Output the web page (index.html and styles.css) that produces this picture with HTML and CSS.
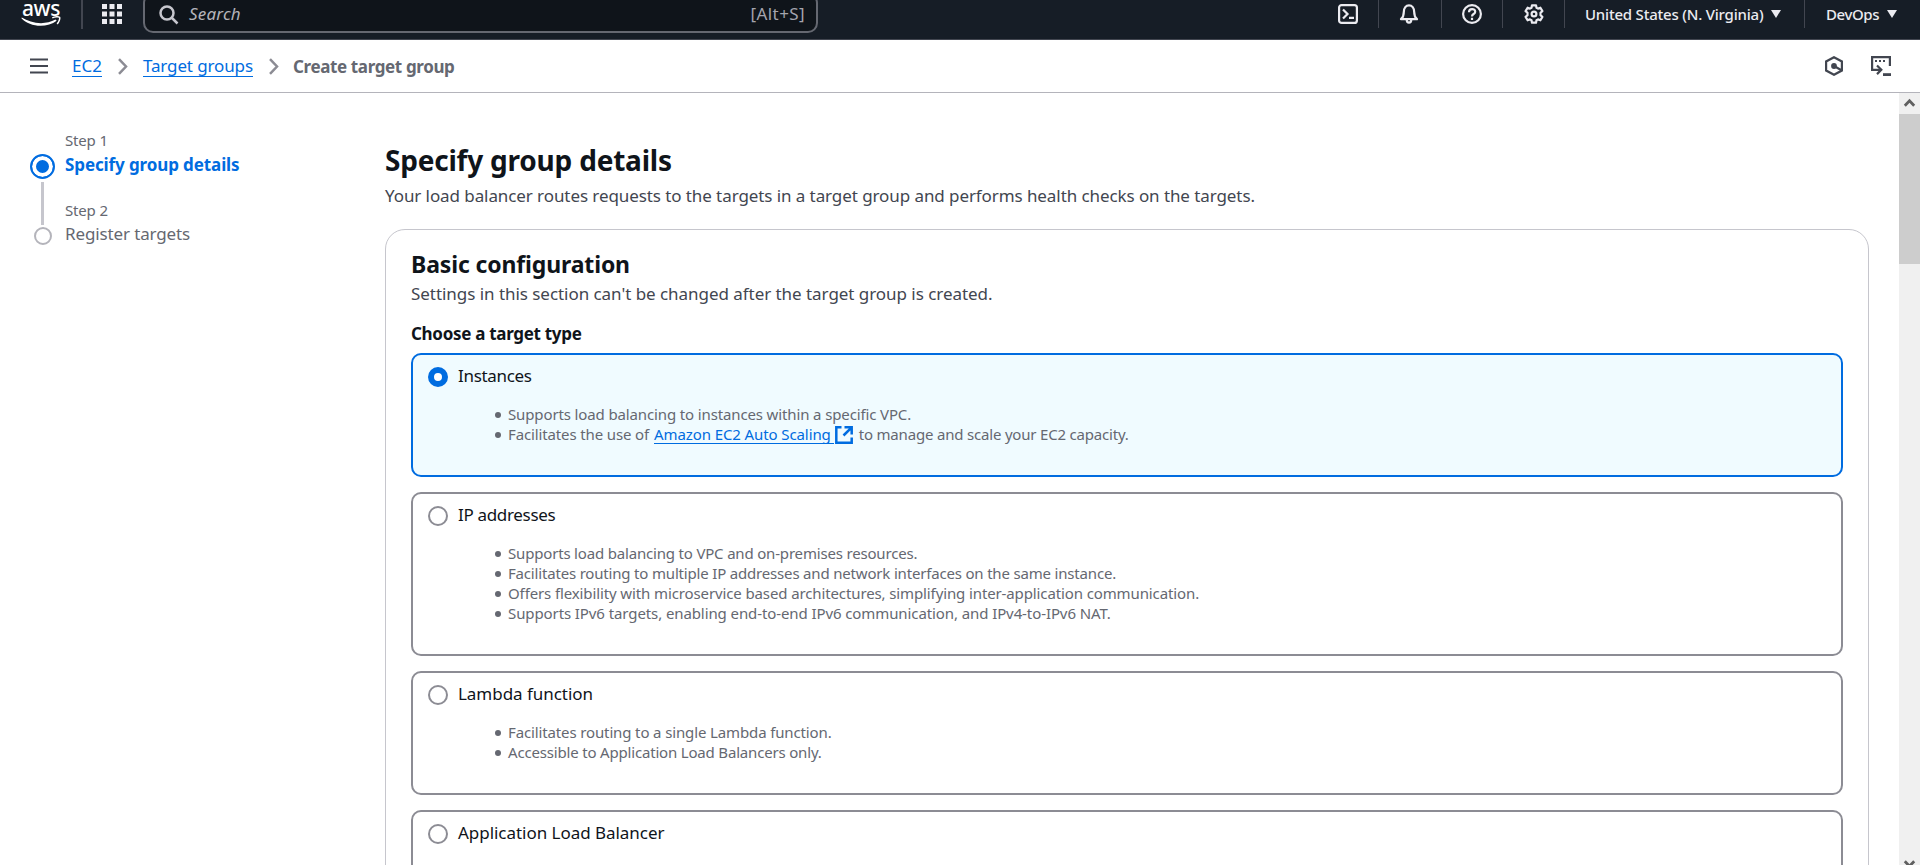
FILE: index.html
```
<!DOCTYPE html>
<html lang="en">
<head>
<meta charset="utf-8">
<title>Create target group | EC2</title>
<link rel="stylesheet" href="styles.css">
</head>
<body>
<header class="topbar">
  <div class="logo"><span class="logo-text">aws</span>
    <svg class="smile" viewBox="0 0 40 11" width="40" height="11"><path d="M.8 1.600C10 7.600 24 9.500 34.500 3.600l1.200 1.200C26 12.300 8.500 11.300.4 2.300z" fill="#fff"/><path d="M31.300 1.900c2.500-1.300 6.300-1.400 7.200-.6.7 1-.4 4.700-2.400 6.600" fill="none" stroke="#fff" stroke-width="1.500"/></svg>
  </div>
  <span class="apps"><svg width="20" height="20" viewBox="0 0 20 20" fill="#ebebf0"><path d="M0 0h5v5H0zM7.500 0h5v5h-5zM15 0h5v5h-5zM0 7.500h5v5H0zM7.500 7.500h5v5h-5zM15 7.500h5v5h-5zM0 15h5v5H0zM7.500 15h5v5h-5zM15 15h5v5h-5z"/></svg></span>
  <div class="search">
    <svg width="20" height="20" viewBox="0 0 20 20" fill="none" stroke="#c6c6cd" stroke-width="2.500"><circle cx="8" cy="8" r="6.500"/><path d="M12.500 12.500l6 6"/></svg>
    <span class="search-text">Search</span><span class="search-key">[Alt+S]</span>
  </div>
  <div class="tools">
    <span class="tool tool-shell"><svg width="20" height="20" viewBox="0 0 20 20" fill="none" stroke="#ebebf0" stroke-width="2.200"><rect x="1.100" y="1.100" width="17.800" height="17.800" rx="2.500"/><path d="M5 5.500l4.500 4.500L5 14.500M11 13.800h5"/></svg></span>
    <span class="tool tool-bell"><svg width="20" height="20" viewBox="0 0 20 20" fill="none" stroke="#ebebf0" stroke-width="2.200" stroke-linejoin="round"><path d="M2 15.200c2.300-2 2.800-4 2.800-7.200C4.800 4 7 1.300 10 1.300S15.200 4 15.200 8c0 3.200.5 5.200 2.800 7.200z"/><path d="M7.700 15.500c0 4.200 4.600 4.200 4.600 0"/></svg></span>
    <span class="tool tool-help"><svg width="20" height="20" viewBox="0 0 20 20" fill="none" stroke="#ebebf0" stroke-width="2.200"><circle cx="10" cy="10" r="8.900"/><path d="M7 8.200C7 4 13.200 4.200 13.200 7.700c0 2.400-3.200 2.200-3.200 4.700M10 13.700v2.300"/></svg></span>
    <span class="tool tool-gear"><svg width="20" height="20" viewBox="0 0 20 20" fill="none" stroke="#ebebf0" stroke-width="2.200" stroke-linejoin="round"><path d="M8 1.300h4l.5 2.500 1.500.8 2.400-.9 2 3.400-1.900 1.700v2.400l1.900 1.700-2 3.400-2.400-.9-1.500.8-.5 2.500H8l-.5-2.500-1.500-.8-2.400.9-2-3.400 1.900-1.700V8.800L1.600 7.100l2-3.400 2.400.9 1.500-.8z"/><circle cx="10" cy="10" r="2.400"/></svg></span>
    <span class="menu region"><span>United States (N. Virginia)</span><i class="caret"></i></span>
    <span class="menu account"><span>DevOps</span><i class="caret"></i></span>
  </div>
</header>
<nav class="crumbs">
  <svg class="burger" width="18" height="16" viewBox="0 0 18 16" stroke="#424650" stroke-width="2.200"><path d="M0 1.500h18M0 8h18M0 14.500h18"/></svg>
  <a class="crumb">EC2</a>
  <svg class="chev" width="10" height="17" viewBox="0 0 10 17" fill="none" stroke="#8c8c94" stroke-width="2.500"><path d="M1 1.200l7 7.300-7 7.300"/></svg>
  <a class="crumb crumb-groups">Target groups</a>
  <svg class="chev" width="10" height="17" viewBox="0 0 10 17" fill="none" stroke="#8c8c94" stroke-width="2.500"><path d="M1 1.200l7 7.300-7 7.300"/></svg>
  <b class="crumb-current">Create target group</b>
  <div class="panel-tools">
    <svg width="18" height="20" viewBox="0 0 18 20"><path d="M9 1.200l7.900 4.300v9L9 18.800l-7.900-4.300v-9z" fill="none" stroke="#424650" stroke-width="2.200"/><circle cx="9" cy="10" r="2.900" fill="#424650"/><path d="M9 10l7.500 4.200" stroke="#424650" stroke-width="2.200"/></svg>
    <svg width="20" height="20" viewBox="0 0 20 20" fill="none" stroke="#424650" stroke-width="2.200"><path d="M18.900 10V1.100H1.100v12.800h9"/><path d="M4 5h10" stroke-width="2" stroke-dasharray="2 2"/><path d="M6 9.500l4.300 4.300L6 18.100"/><path d="M12 18.600h8" stroke-width="2.800"/></svg>
  </div>
</nav>
<div class="view">
  <aside class="stepper">
    <div class="rail"><span class="dot-on"></span><span class="line"></span><span class="dot-off"></span></div>
    <div class="steps">
      <div class="step"><span class="step-no">Step 1</span><b class="step-on">Specify group details</b></div>
      <div class="step"><span class="step-no">Step 2</span><span class="step-off">Register targets</span></div>
    </div>
  </aside>
  <main class="main">
    <h1 class="title">Specify group details</h1>
    <p class="lead">Your load balancer routes requests to the targets in a target group and performs health checks on the targets.</p>
    <section class="card">
      <h2 class="card-title">Basic configuration</h2>
      <p class="card-lead">Settings in this section can't be changed after the target group is created.</p>
      <p class="label">Choose a target type</p>
      <div class="tiles">
        <div class="tile tile-on">
          <div class="tile-head"><span class="radio radio-on"></span><span class="name name-tight">Instances</span></div>
          <ul class="list">
            <li><span>Supports load balancing to instances within a specific VPC.</span></li>
            <li><span>Facilitates the use of</span><a class="link">Amazon EC2 Auto Scaling</a><svg class="ext" width="18" height="18" viewBox="0 0 18 18" fill="none" stroke="#006ce0" stroke-width="2.500"><path d="M6.500 1.300H1.300v15.400h15.400v-5.200M9.500 1.300h7.200v7.200M16.700 1.300L8.500 9.500"/></svg><span class="after">to manage and scale your EC2 capacity.</span></li>
          </ul>
        </div>
        <div class="tile">
          <div class="tile-head"><span class="radio"></span><span class="name name-tight">IP addresses</span></div>
          <ul class="list">
            <li><span class="tight">Supports load balancing to VPC and on-premises resources.</span></li>
            <li><span class="tight">Facilitates routing to multiple IP addresses and network interfaces on the same instance.</span></li>
            <li><span class="micro">Offers flexibility with microservice based architectures, simplifying inter-application communication.</span></li>
            <li><span class="loose">Supports IPv6 targets, enabling end-to-end IPv6 communication, and IPv4-to-IPv6 NAT.</span></li>
          </ul>
        </div>
        <div class="tile">
          <div class="tile-head"><span class="radio"></span><span class="name">Lambda function</span></div>
          <ul class="list">
            <li><span>Facilitates routing to a single Lambda function.</span></li>
            <li><span class="tight">Accessible to Application Load Balancers only.</span></li>
          </ul>
        </div>
        <div class="tile tile-last">
          <div class="tile-head"><span class="radio"></span><span class="name">Application Load Balancer</span></div>
        </div>
      </div>
    </section>
  </main>
  <div class="scroll"><svg width="21" height="21" viewBox="0 0 21 21" fill="none" stroke="#606060" stroke-width="2.800"><path d="M5.800 12.700l4.700-4.900 4.700 4.900"/></svg><div class="thumb"></div><svg class="scroll-down" width="21" height="6" viewBox="0 0 21 6" fill="none" stroke="#606060" stroke-width="2.800"><path d="M5.800 2.300l4.700 4.900 4.700-4.900"/></svg></div>
</div>
</body>
</html>
```
FILE: styles.css
```
*{box-sizing:border-box}
body{margin:0;height:865px;overflow:hidden;background:#fff;color:#0f141a;font:17px/25px "Noto Sans",sans-serif;display:flex;flex-direction:column}
h1,h2,p,ul{margin:0;padding:0}
svg{display:block;flex:none}
span,b,a{white-space:nowrap}
.topbar{height:40px;flex:none;background:#161d26;border-bottom:1px solid #424650;display:flex;align-items:flex-start;color:#ebebf0}
.logo{width:83px;height:29px;flex:none;border-right:2px solid #424650;padding-left:21px}
.logo-text{display:block;font:500 21px/16px "Noto Sans",sans-serif;letter-spacing:-.4px;color:#fff;padding-left:1px;height:16px}
.apps{padding:4px 21px 0 19px}
.search{width:675px;height:40px;margin-top:-7px;border:2px solid #656871;border-radius:10px;background:#0f141a;display:flex;align-items:center;padding:3px 11px 0 14px}
.search-text{font-style:italic;color:#b4b4bb;margin-left:10px;letter-spacing:.2px;padding-bottom:3px}
.search-key{margin-left:auto;color:#a4a4ad;letter-spacing:.4px;padding-bottom:2px}
.tools{margin-left:auto;display:flex;height:28px;font-size:15px;letter-spacing:-.21px;font-weight:500}
.tool{padding-top:4px;border-right:1px solid #424650}
.tool-shell{width:41px}
.tool-bell{width:63px;padding-left:20px}
.tool-help{width:61px;padding-left:20px}
.tool-gear{width:62px;padding-left:21px}
.menu{display:flex;align-items:center;gap:8px}
.region{padding-left:20px;width:240px;border-right:1px solid #424650}
.account{padding-left:21px;width:115px;letter-spacing:-.4px}
.caret{border:5px solid transparent;border-top:8px solid #ebebf0;border-bottom:0}
.crumbs{height:53px;flex:none;border-bottom:1px solid #b4b4bb;display:flex;align-items:center;padding:0 29px 0 30px}
.burger{margin-right:24px}
.crumb{color:#006ce0;border-bottom:1px solid #006ce0;line-height:21px}
.crumb-groups{letter-spacing:-.12px}
.chev{margin:0 15px 0 16px}
.crumb-groups+.chev{margin-right:14px}
.crumb-current{color:#656871;letter-spacing:-.37px}
.panel-tools{margin-left:auto;display:flex;gap:28px}
.view{flex:1;min-height:0;display:flex;overflow:hidden}
.stepper{width:385px;flex:none;padding:36px 0 0 30px;display:flex}
.rail{width:25px;padding-top:25px;display:flex;flex-direction:column;align-items:center}
.dot-on{width:25px;height:25px;flex:none;border:2.500px solid #006ce0;border-radius:50%;background:#006ce0;box-shadow:inset 0 0 0 4px #fff}
.line{width:3px;height:43px;margin:3px 0 2px;background:#c6c6cd}
.dot-off{width:18px;height:18px;border:2px solid #b4b4bb;border-radius:50%}
.steps{padding-left:10px;color:#656871}
.step{display:flex;flex-direction:column;align-items:flex-start;height:70px}
.step-no{font-size:15px;line-height:22px;letter-spacing:-.17px}
.step-on{color:#006ce0;letter-spacing:-.11px;padding-top:1px}
.step-off{letter-spacing:-.13px}
.main{width:1484px;flex:none;padding-top:49px}
.title{font-size:28px;line-height:36px;letter-spacing:-.21px}
.lead{color:#424650;margin-top:5px;letter-spacing:-.083px}
.card{margin-top:21px;border:1px solid #c6c6cd;border-radius:20px;padding:18px 25px;height:700px}
.card-title{font-size:23px;line-height:32px;letter-spacing:-.14px}
.card-lead{color:#424650;margin-top:1px;letter-spacing:-.045px}
.label{font-weight:700;margin-top:15px;letter-spacing:-.305px}
.tiles{display:flex;flex-direction:column;gap:15px;margin-top:7px}
.tile{border:2px solid #8c8c94;border-radius:10px;padding:10px 15px 30px}
.tile-on{border-color:#006ce0;background:#f0fbff}
.tile-last{height:124px}
.tile-head{display:flex;align-items:center;gap:10px;height:24px}
.name{padding-bottom:3px;letter-spacing:-.036px}
.name-tight{letter-spacing:-.32px}
.radio{width:20px;height:20px;border:2px solid #8c8c94;border-radius:50%;background:#fff}
.radio-on{border:6px solid #006ce0}
.list{list-style:none;padding:16px 0 0 80px;color:#656871;font-size:15px;line-height:20px;letter-spacing:-.13px}
.list li{display:flex;align-items:center;height:20px}
.list li::before{content:"";width:6px;height:6px;border-radius:50%;background:#656871;margin-right:7px;margin-left:-13px}
.list span{padding-bottom:2px}
.tight{letter-spacing:-.18px}
.micro{letter-spacing:-.117px}
.loose{letter-spacing:-.095px}
.link{color:#006ce0;border-bottom:1px solid #006ce0;margin-left:5px;padding-right:3px;line-height:17px;letter-spacing:-.1px}
.ext{margin:0 6px 0 1px}
.after{letter-spacing:-.188px}
.scroll{margin-left:auto;width:21px;background:#f0f0f0;display:flex;flex-direction:column}
.thumb{height:150px;background:#cdcdcd}
.scroll-down{margin-top:auto}
```
